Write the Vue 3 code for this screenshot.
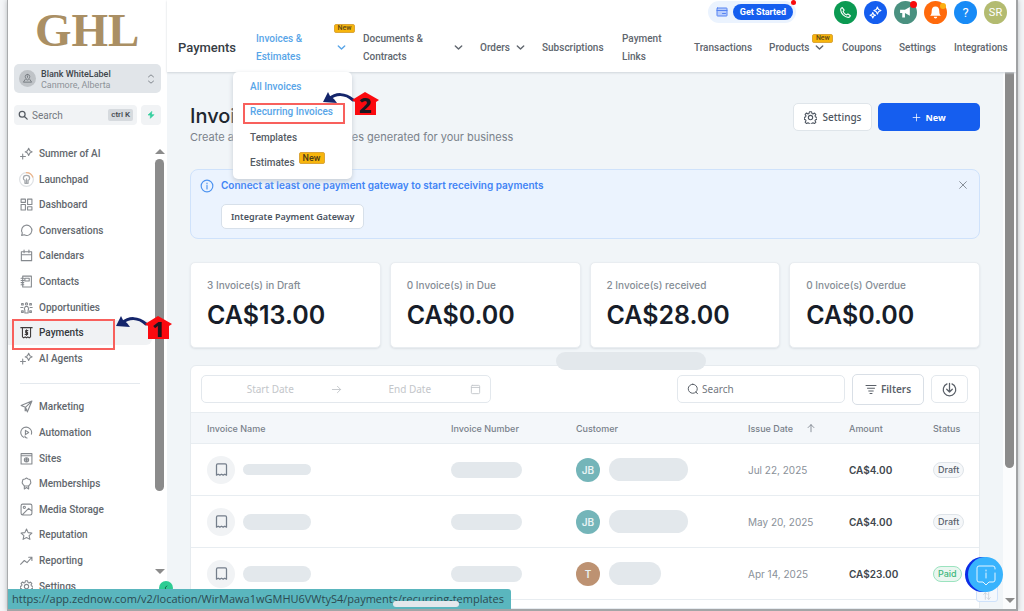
<script setup>
import { ref } from 'vue'

const icons = {
  ai: ['M5 13v9M1 17.500h9', 'M16 2.500l2.200 4.300L22.500 9l-4.300 2.200L16 15.500l-2.200-4.300L9.500 9l4.300-2.200z'],
  launch: ['M12 5.500c3 0 5 2 5 4.500 0 2-1.500 3-2.500 3.200V18h-5v-4.800C8.500 13 7 12 7 10c0-2.500 2-4.500 5-4.500zM12 11v7'],
  dashboard: ['M2 2h8v6H2zM14 2h8v10h-8zM2 12h8v10H2zM14 16h8v6h-8z'],
  chat: ['M3 21l1.300-4.500A9.500 9.500 0 1 1 8 20z'],
  calendar: ['M2.500 5h19v16.500h-19zM2.500 10.500h19M7.500 2v5M16.500 2v5'],
  contacts: ['M5 2h16v20H5zM9 6h8v5H9zM2 6h5M2 10h5M2 14h5M2 18h5'],
  opportunities: ['M12 3.500a2 2 0 1 1 0 4 2 2 0 0 1 0-4zM9 22v-5l-1-3 2-4h4l2 4-1 3v5zM3 4.500h3v3H3zM18 4.500h3v3h-3zM1.500 12h4M18.500 12h4M3 18h3v3H3zM18 18h3v3h-3z'],
  payments: ['M1.500 3h21M4.500 3v17M19.500 3v17M4.500 20l2.500 2 2.500-2 2.500 2 2.500-2 2.500 2 2.500-2', 'M14.500 8.500h-4v3.500h3.500v3.500H9.500M12 7v10'],
  send: ['M22 2L2 10l8 3.500L13.500 22zM22 2L10 13.500M9.500 14v6l3-3'],
  automation: ['M7 21a10 10 0 1 1 14-6M10 8l6 4-6 4zM9 18.500c0 2 2 3.500 4 3.500'],
  sites: ['M2 3h20v19H2zM2 7h20M12 10.500a4 4 0 1 1 0 8 4 4 0 0 1 0-8zM8 14.500h8M12 10.500v8'],
  badge: ['M12 2l3 1.500 3.500 1 1 3.500.5 3-2 3-2 2.500H8L6 14l-2-3 .5-3 1-3.500L9 3.500zM8 16v6l4-2.500L16 22v-6'],
  image: ['M5 2h14a3 3 0 0 1 3 3v14a3 3 0 0 1-3 3H5a3 3 0 0 1-3-3V5a3 3 0 0 1 3-3zM8 6a2 2 0 1 1 0 4 2 2 0 0 1 0-4zM5 21L16 10l6 5'],
  star: ['M12 2l3 6.500 7 .8-5.200 4.700L18.300 21 12 17.500 5.700 21l1.500-7L2 9.300l7-.8z'],
  trend: ['M1 19l7-7 5 4 9-10M16 6h6v6'],
  gear: ['M12 8a4 4 0 1 1 0 8 4 4 0 0 1 0-8z', 'M10 1.500h4l.7 3 2 .9 2.600-1.700 2.500 2.600-1.500 2.700.9 2 2.800.5v4l-2.800.5-.9 2 1.600 2.700-2.600 2.600-2.600-1.600-2 .8-.7 2h-4l-.7-2-2-.8-2.600 1.600-2.600-2.600 1.600-2.700-.9-2-2.300-.5v-4l2.300-.5.9-2-1.600-2.700 2.600-2.600 2.600 1.700 2-.9z'],
  search: ['M10 3a7 7 0 1 1 0 14 7 7 0 0 1 0-14zM15 15l7 7'],
  magnify: ['M11.500 2.500a9 9 0 1 1 0 18 9 9 0 0 1 0-18zM18 18l3 3.500'],
  down: ['M5 8.500l7 7 7-7'],
  updown: ['M6 7l6-5 6 5M6 17l6 5 6-5'],
  plus: ['M12 3v18M3 12h18'],
  close: ['M4 4l16 16M20 4L4 20'],
  info: ['M12 2a10 10 0 1 1 0 20 10 10 0 0 1 0-20zM12 11v6M12 7v1'],
  arrow: ['M3 12h18M14 5l7 7-7 7'],
  up: ['M12 21V4M5 11l7-7 7 7'],
  cal: ['M5 3h14a2 2 0 0 1 2 2v14a2 2 0 0 1-2 2H5a2 2 0 0 1-2-2V5a2 2 0 0 1 2-2zM3 7.500h18'],
  filter: ['M2 5h20M5 10.500h14M7.500 16h9M10 21h4'],
  download: ['M8 3a10 10 0 1 0 8 0M12 2v14M7.500 11.500L12 16l4.500-4.500'],
  receipt: ['M4 21V5a2 2 0 0 1 2-2h12a2 2 0 0 1 2 2v16l-2.700-1.500L14.700 21 12 19.500 9.300 21l-2.600-1.500z'],
  phone: ['M6 3l3.500 4.500L7.500 10c1 3 3.500 5.500 6.500 6.500l2.500-2L21 18c-.5 2-2 3-4 3C10 20.500 3.500 14 3 7c0-2 1-3.500 3-4z'],
  stars: ['M15.500 2l2 4.500L22 8.500l-4.500 2-2 4.500-2-4.500-4.500-2 4.500-2zM7 12l1.500 3.500L12 17l-3.500 1.500L7 22l-1.500-3.500L2 17l3.500-1.500z'],
  card: ['M3 4h18a1 1 0 0 1 1 1v14a1 1 0 0 1-1 1H3a1 1 0 0 1-1-1V5a1 1 0 0 1 1-1zM2 9h20M13 15h6'],
}

const mainNav = [
  ['Summer of AI', 'ai'], ['Launchpad', 'launch'], ['Dashboard', 'dashboard'], ['Conversations', 'chat'],
  ['Calendars', 'calendar'], ['Contacts', 'contacts'], ['Opportunities', 'opportunities'],
  ['Payments', 'payments'], ['AI Agents', 'ai'],
]
const moreNav = [
  ['Marketing', 'send'], ['Automation', 'automation'], ['Sites', 'sites'], ['Memberships', 'badge'],
  ['Media Storage', 'image'], ['Reputation', 'star'], ['Reporting', 'trend'], ['Settings', 'gear'],
]
const tabs = [
  { label: 'Invoices & Estimates', wrap: true, menu: true, isNew: true, active: true },
  { label: 'Documents & Contracts', wrap: true, menu: true },
  { label: 'Orders', menu: true },
  { label: 'Subscriptions' },
  { label: 'Payment Links', wrap: true },
  { label: 'Transactions' },
  { label: 'Products', menu: true, isNew: true },
  { label: 'Coupons' },
  { label: 'Settings' },
  { label: 'Integrations' },
]
const cards = [
  ['3 Invoice(s) in Draft', 'CA$13.00'], ['0 Invoice(s) in Due', 'CA$0.00'],
  ['2 Invoice(s) received', 'CA$28.00'], ['0 Invoice(s) Overdue', 'CA$0.00'],
]
const rows = [
  { who: 'JB', tone: 'teal', date: 'Jul 22, 2025', amount: 'CA$4.00', status: 'Draft', thin: true },
  { who: 'JB', tone: 'teal', date: 'May 20, 2025', amount: 'CA$4.00', status: 'Draft' },
  { who: 'T', tone: 'brown', date: 'Apr 14, 2025', amount: 'CA$23.00', status: 'Paid', short: true },
]
const query = ref('')
const navQuery = ref('')
</script>

<template>
  <div class="screen">
    <aside class="sidebar">
      <div class="logo">GHL</div>
      <button class="account">
        <span class="account-pic">
          <svg viewBox="0 0 24 24"><path d="M12 3a5 5 0 0 1 5 5c0 3-5 8-5 8s-5-5-5-8a5 5 0 0 1 5-5zM12 6.500v3M7 14l-4 6h18l-4-6" /></svg>
        </span>
        <span class="account-text"><b>Blank WhiteLabel</b><span>Canmore, Alberta</span></span>
        <svg class="account-arrows" viewBox="0 0 24 24"><path :d="icons.updown[0]" /></svg>
      </button>
      <div class="quick">
        <label class="quick-search">
          <svg viewBox="0 0 24 24"><path :d="icons.search[0]" /></svg>
          <input v-model="navQuery" placeholder="Search" aria-label="Search menu" />
          <kbd>ctrl K</kbd>
        </label>
        <button class="bolt" aria-label="Quick actions">
          <svg viewBox="0 0 24 24"><path d="M14 2L3 12h7v10l11-11h-7z" /></svg>
        </button>
      </div>
      <div class="side-body">
        <nav class="side-nav">
          <div class="side-list main-list">
            <a v-for="[label, icon] in mainNav" :key="label" href="#" class="side-link" :class="{ current: label === 'Payments' }">
              <svg viewBox="0 0 24 24" :class="{ ringed: icon === 'launch' }">
                <template v-if="icon === 'launch'">
                  <circle class="ring" cx="12" cy="12" r="11" />
                  <path class="ring-arc" d="M12 1a11 11 0 0 1 10 7" />
                </template>
                <path v-for="d in icons[icon]" :key="d" :d="d" />
              </svg>{{ label }}
            </a>
          </div>
          <hr />
          <div class="side-list more-list">
            <a v-for="[label, icon] in moreNav" :key="label" href="#" class="side-link">
              <svg viewBox="0 0 24 24"><path v-for="d in icons[icon]" :key="d" :d="d" /></svg>{{ label }}
            </a>
          </div>
        </nav>
        <div class="side-scroll"><i class="tri-up"></i><i class="thumb"></i><i class="tri-down"></i></div>
      </div>
      <span class="collapse"><svg viewBox="0 0 24 24"><path d="M15 4L8 12l7 8" /></svg></span>
      <span class="red-box pay-box"></span>
    </aside>

    <div class="main">
      <header class="header">
        <div class="tools">
          <div class="start">
            <svg viewBox="0 0 24 24"><path :d="icons.card[0]" /></svg>
            <button>Get Started</button>
            <i class="dot start-dot"></i>
          </div>
          <button class="tool green" aria-label="Phone"><svg viewBox="0 0 24 24"><path :d="icons.phone[0]" /></svg></button>
          <button class="tool blue" aria-label="Assistant"><svg viewBox="0 0 24 24"><path :d="icons.stars[0]" /></svg></button>
          <button class="tool sea" aria-label="News">
            <svg viewBox="0 0 24 24"><path class="solid" d="M2 7h9l9-5v16l-9-5v8H6v-8H2z" /></svg><i class="dot"></i>
          </button>
          <button class="tool orange" aria-label="Notifications">
            <svg viewBox="0 0 24 24"><path class="solid" d="M12 1c5 0 7 4 7 8 0 5 1 7 3 9H2c2-2 3-4 3-9 0-4 2-8 7-8zM9 20h6c0 2-1 3-3 3s-3-1-3-3z" /></svg><i class="dot amber"></i>
          </button>
          <button class="tool sky" aria-label="Help">?</button>
          <button class="tool user">SR</button>
        </div>
        <nav class="tabs">
          <strong>Payments</strong>
          <a v-for="t in tabs" :key="t.label" href="#" class="tab" :class="{ active: t.active, spread: t.wrap && t.menu }">
            <span :class="{ two: t.wrap }">{{ t.label }}</span>
            <span v-if="t.menu" class="chev">
              <svg viewBox="0 0 24 24"><path :d="icons.down[0]" /></svg>
              <em v-if="t.isNew" class="new">New</em>
            </span>
          </a>
        </nav>
        <div class="dropdown">
          <a href="#" class="on">All Invoices</a>
          <a href="#" class="on">Recurring Invoices</a>
          <a href="#">Templates</a>
          <a href="#">Estimates <em class="new-big">New</em></a>
          <span class="red-box"></span>
        </div>
      </header>

      <div class="body">
        <main class="content">
          <div class="head">
            <div><h1>Invoices</h1><p>Create and manage your invoices generated for your business</p></div>
            <div class="actions">
              <button class="btn"><svg viewBox="0 0 24 24"><path v-for="d in icons.gear" :key="d" :d="d" /></svg>Settings</button>
              <button class="btn primary"><svg viewBox="0 0 24 24"><path :d="icons.plus[0]" /></svg>New</button>
            </div>
          </div>

          <section class="banner">
            <svg viewBox="0 0 24 24"><path :d="icons.info[0]" /></svg>
            <div>
              <p>Connect at least one payment gateway to start receiving payments</p>
              <button>Integrate Payment Gateway</button>
            </div>
            <button class="close" aria-label="Close"><svg viewBox="0 0 24 24"><path :d="icons.close[0]" /></svg></button>
          </section>

          <section class="cards">
            <article v-for="([label, sum], i) in cards" :key="i"><p>{{ label }}</p><strong>{{ sum }}</strong></article>
          </section>

          <section class="panel">
            <i class="blob float-blob"></i>
            <div class="toolbar">
              <div class="dates">
                <input placeholder="Start Date" aria-label="Start date" />
                <svg viewBox="0 0 24 24"><path :d="icons.arrow[0]" /></svg>
                <input placeholder="End Date" aria-label="End date" />
                <svg viewBox="0 0 24 24"><path :d="icons.cal[0]" /></svg>
              </div>
              <label class="find">
                <svg viewBox="0 0 24 24"><path :d="icons.magnify[0]" /></svg>
                <input v-model="query" placeholder="Search" aria-label="Search invoices" />
              </label>
              <button class="filters"><svg viewBox="0 0 24 24"><path :d="icons.filter[0]" /></svg>Filters</button>
              <button class="export" aria-label="Download"><svg viewBox="0 0 24 24"><path :d="icons.download[0]" /></svg></button>
            </div>
            <table>
              <colgroup><col /><col class="c-num" /><col class="c-cust" /><col class="c-date" /><col class="c-amt" /><col class="c-stat" /></colgroup>
              <thead>
                <tr>
                  <th>Invoice Name</th><th>Invoice Number</th><th>Customer</th>
                  <th>Issue Date <svg viewBox="0 0 24 24"><path :d="icons.up[0]" /></svg></th>
                  <th>Amount</th><th>Status</th>
                </tr>
              </thead>
              <tbody>
                <tr v-for="(r, i) in rows" :key="i">
                  <td>
                    <div class="cell">
                      <span class="doc"><svg viewBox="0 0 24 24"><path :d="icons.receipt[0]" /></svg></span>
                      <i class="blob name-blob" :class="{ thin: r.thin }"></i>
                    </div>
                  </td>
                  <td><i class="blob num-blob"></i></td>
                  <td>
                    <div class="cell cust"><span class="avatar" :class="r.tone">{{ r.who }}</span><i class="blob cust-blob" :class="{ short: r.short }"></i></div>
                  </td>
                  <td class="date">{{ r.date }}</td>
                  <td class="amount">{{ r.amount }}</td>
                  <td><span class="pill" :class="{ paid: r.status === 'Paid' }">{{ r.status }}</span></td>
                </tr>
              </tbody>
            </table>
          </section>
        </main>
        <div class="page-scroll"><i class="thumb"></i><i class="tri-down"></i></div>
      </div>
    </div>

    <span class="sort-chip"><svg viewBox="0 0 24 24"><path d="M8 20V4M4 8l4-4 4 4M16 4v16M12 16l4 4 4-4" /></svg></span>
    <button class="help" aria-label="Chat">
      <svg viewBox="0 0 24 24"><path d="M21 10v7a2 2 0 0 1-2 2h-4l-3 3-3-3H5a2 2 0 0 1-2-2V5a2 2 0 0 1 2-2h14a2 2 0 0 1 2 2v1M12 10v5M12 7v1" /></svg>
    </button>

    <svg v-for="n in 2" :key="n" class="marker" :class="'marker-' + n" viewBox="0 0 58 26">
      <path class="tail" d="M7 8C14 2 23 2 31 9" />
      <path class="tip" d="M1 11L6 1l2 4 4 3 3 4z" />
      <path class="house" d="M43 1l14 8-3 2v13H33V11l-3-2z" />
      <text x="43" y="22" text-anchor="middle">{{ n }}</text>
    </svg>

    <div class="url">https://app.zednow.com/v2/location/WirMawa1wGMHU6VWtyS4/payments/recurring-templates<i></i></div>
  </div>
</template>

<style>
body { margin: 0; background: #f3f5f7; overflow: hidden; }
</style>

<style scoped>
* { box-sizing: border-box; }
.screen { position: relative; display: flex; height: 100vh; margin: 0 6px 0 7px; border-left: 1px solid #a9abad; border-right: 2px solid #a0a2a4; border-bottom: 2px solid #a3a5a7; box-shadow: 0 0 5px #b5b8bb; overflow: hidden; background: #fff; font-family: Roboto, "Liberation Sans", sans-serif; color: #5b6169; }
svg { fill: none; stroke: currentColor; stroke-width: 2; stroke-linecap: round; stroke-linejoin: round; flex: none; }
a { color: inherit; text-decoration: none; }
button, input { font: inherit; color: inherit; border: 0; padding: 0; background: none; min-width: 0; }
input { outline: 0; }
em, i { font-style: normal; }
p, h1 { margin: 0; }
.solid { fill: currentColor; stroke: none; }

.sidebar { position: relative; display: flex; flex-direction: column; width: 159px; flex: none; background: #fff; }
.logo { height: 64px; padding-left: 27px; font: bold 47px/60px "Liberation Serif", serif; color: #aa8f64; }
.account { display: flex; align-items: center; gap: 5px; height: 29px; margin: 0 6px; padding: 0 5px; border-radius: 5px; background: #e1e5e9; text-align: left; }
.account-pic { display: grid; place-items: center; width: 17px; height: 17px; border-radius: 50%; background: #bfc3c7; color: #74797f; }
.account-pic svg { width: 11px; height: 11px; }
.account-text { flex: 1; padding-top: 2px; font-size: 9px; line-height: 11px; color: #8d9298; white-space: nowrap; }
.account-text b { display: block; font-weight: 500; color: #3f454c; }
.account-text span { display: block; }
.account-arrows { width: 10px; height: 14px; color: #6f757c; }
.quick { display: flex; gap: 4px; margin: 12px 6px 0; height: 20px; }
.quick-search { flex: 1; min-width: 0; display: flex; align-items: center; gap: 4px; padding: 0 4px; border-radius: 4px; background: #f1f3f5; font-size: 10px; }
.quick-search svg { width: 10px; height: 10px; stroke-width: 3; color: #555b62; }
.quick-search input { flex: 1; width: 0; }
input::placeholder { color: #73787f; opacity: 1; }
kbd { padding: 0 3px; border-radius: 2px; background: #d6dade; color: #40464d; font: 500 8px/12px Roboto, sans-serif; white-space: nowrap; }
.bolt { display: grid; place-items: center; width: 20px; border-radius: 4px; background: #f1f3f5; }
.bolt svg { width: 8px; height: 8px; fill: #35cf9e; stroke: #35cf9e; }
.side-body { flex: 1; display: flex; margin-top: 16px; min-height: 0; }
.side-nav { flex: 1; }
.side-list { display: grid; grid-auto-rows: 1fr; }
.main-list { height: 230px; }
.more-list { height: 205px; }
.side-link { display: flex; align-items: center; gap: 6px; padding-left: 12px; border-radius: 0 6px 6px 0; font-size: 10px; font-weight: 500; color: #62676d; }
.side-link svg { width: 13px; height: 13px; stroke-width: 2; color: #85898e; }
.side-link svg.ringed { width: 15px; height: 15px; margin: 0 -1px; color: #a4a8ac; }
.side-link .ring { stroke: #dfe2e5; }
.side-link .ring-arc { stroke: #efb589; }
.side-link.current { background: #f0f2f4; color: #34383d; }
.side-link.current svg { color: #3e3b3b; }
.side-nav hr { border: 0; height: 1px; margin: 12px 12px 10px; background: #e4e9ee; }
.side-scroll { display: flex; flex-direction: column; align-items: center; width: 15px; padding-top: 8px; }
.tri-up, .tri-down { border: 5px solid transparent; border-top: 0; border-bottom: 5px solid #8b8b8b; }
.tri-down { border-top: 5px solid #8b8b8b; border-bottom: 0; }
.thumb { width: 9px; border-radius: 5px; background: #8b8b8b; }
.side-scroll .thumb { height: 332px; margin: 5px 0 78px; }
.collapse { position: absolute; left: 151px; bottom: 14px; display: grid; place-items: center; width: 14px; height: 14px; border-radius: 50%; background: #2dcc93; color: #176b4d; z-index: 2; }
.collapse svg { width: 6px; height: 6px; stroke-width: 4; }
.red-box { position: absolute; border: 2px solid #f8605c; pointer-events: none; }
.pay-box { left: 4px; top: 319px; width: 103px; height: 31px; }

.main { flex: 1; min-width: 0; display: flex; flex-direction: column; }
.header { position: relative; z-index: 3; height: 72px; background: #fff; box-shadow: 0 1px 2px #cfd5da; }
.tools { display: flex; justify-content: flex-end; align-items: center; gap: 7px; height: 24px; padding-right: 9px; }
.start { position: relative; display: flex; align-items: center; gap: 5px; height: 22px; padding: 0 3px 0 8px; margin-right: 31px; border-radius: 11px; background: #ebf3fe; color: #5583f3; }
.start svg { width: 12px; height: 12px; fill: #b9cdfb; }
.start button { height: 16px; padding: 0 7px; border-radius: 8px; background: #155eef; color: #fff; font-size: 9px; font-weight: 700; }
.dot { position: absolute; right: 0; top: 0; width: 7px; height: 7px; border-radius: 50%; background: #f90b0b; }
.dot.amber { background: #fbb013; right: 1px; top: 2px; width: 6px; height: 6px; }
.start-dot { width: 5px; height: 5px; top: -1px; }
.tool { position: relative; display: grid; place-items: center; width: 23px; height: 23px; border-radius: 50%; color: #fff; font-size: 13px; }
.tool svg { width: 13px; height: 13px; }
.green { background: #0b9a52; } .blue { background: #155eef; } .sea { background: #4a9180; } .orange { background: #ff6a0c; } .sky { background: #188bf6; }
.user { background: #b3bb70; font-size: 11px; }
.tabs { display: grid; grid-template-columns: 78fr 107fr 117fr 62fr 80fr 72fr 75fr 73fr 57fr 55fr 62fr; align-items: center; height: 47px; padding-left: 11px; font-size: 10px; font-weight: 500; line-height: 18px; }
.tabs > * { min-width: 0; white-space: nowrap; }
.tabs strong { font-size: 13px; font-weight: 500; color: #373d44; }
.tab { display: flex; align-items: center; gap: 5px; color: #60666e; }
.tab.active { color: #58a5e8; }
.two { width: min-content; white-space: normal; }
.spread { justify-content: space-between; padding-right: 16px; }
.spread .two { width: 66px; }
.chev { position: relative; display: grid; }
.chev svg { width: 11px; height: 11px; stroke-width: 3; }
.new { position: absolute; left: -2px; bottom: 10px; width: 21px; border: 1px solid #dba63a; border-radius: 2px; background: #f7b50c; color: #5d4717; font-size: 7px; line-height: 7px; text-align: center; }
.active .new { bottom: 20px; }
.dropdown { position: absolute; left: 66px; top: 72px; display: grid; grid-auto-rows: 1fr; width: 119px; height: 107px; padding: 2px 0 4px; border-radius: 5px; background: #fff; box-shadow: 0 2px 5px #c6cdd5; font-size: 10px; font-weight: 500; color: #555b63; }
.dropdown a { display: flex; align-items: center; gap: 4px; padding-left: 17px; white-space: nowrap; }
.dropdown .on { color: #58a5e8; }
.new-big { padding: 0 3px; margin-bottom: 8px; border: 1px solid #dba63a; border-radius: 2px; background: #f7b50c; color: #4d3b16; font-size: 9px; line-height: 10px; }
.dropdown .red-box { left: 10px; top: 31px; width: 102px; height: 21px; }

.body { flex: 1; min-height: 0; display: flex; }
.content { flex: 1; min-width: 0; padding: 31px 23px 0; background: #f1f5f8; display: flex; flex-direction: column; font-family: Inter, "Liberation Sans", sans-serif; }
.head { display: flex; justify-content: space-between; height: 66px; }
h1 { font-size: 20px; line-height: 26px; font-weight: 500; color: #20262e; }
.head p { font-size: 11px; line-height: 17px; color: #7a828b; }
.actions { display: flex; gap: 6px; height: 28px; font: 500 10px "Noto Sans", sans-serif; }
.btn { display: flex; align-items: center; justify-content: center; gap: 6px; width: 79px; border: 1px solid #dfe5ea; border-radius: 5px; background: #fff; color: #4d5560; }
.btn svg { width: 13px; height: 13px; }
.btn.primary { width: 102px; gap: 4px; border: 0; background: #155eef; color: #fff; font-weight: 700; font-size: 9px; }
.primary svg { width: 9px; height: 9px; }
.banner { display: flex; gap: 7px; height: 70px; padding: 9px 10px 0 9px; border: 1px solid #cfe2fb; border-radius: 8px; background: #ebf3fe; color: #4284f5; font-size: 10px; font-weight: 600; }
.banner > div { flex: 1; }
.banner > svg { width: 14px; height: 14px; color: #4d93f0; }
.banner p { line-height: 13px; }
.banner div button { height: 25px; margin-top: 12px; padding: 0 9px; border: 1px solid #d7e0ea; border-radius: 5px; background: #fff; color: #4b545f; font: 600 9px "Noto Sans", sans-serif; }
.close { width: 12px; height: 14px; color: #737b84; }
.close svg { width: 10px; height: 10px; }
.cards { display: grid; grid-template-columns: repeat(4, 1fr); gap: 9px; margin-top: 23px; }
article { height: 86px; padding: 15px 16px 0; border: 1px solid #e9edf1; border-radius: 5px; background: #fff; box-shadow: 0 1px 2px #dbe0e5; }
article p { font: 500 10px/15px Inter, sans-serif; color: #858d95; }
article strong { display: block; margin-top: 7px; font-size: 25px; line-height: 30px; font-weight: 600; color: #171d29; }
.panel { position: relative; flex: 1; margin-top: 17px; border: 1px solid #e6ebef; border-radius: 6px 6px 0 0; background: #fff; }
.blob { display: block; flex: none; border-radius: 12px; background: #e3e8ec; }
.float-blob { position: absolute; left: 365px; top: -14px; width: 150px; height: 18px; }
.toolbar { display: flex; align-items: center; gap: 7px; height: 46px; padding: 0 11px 0 10px; }
.dates, .find, .filters, .export { display: flex; align-items: center; height: 28px; border: 1px solid #e3e8ed; border-radius: 5px; font: 400 10px "Noto Sans", sans-serif; }
.dates { width: 290px; margin-right: auto; padding: 0 9px 0 0; color: #c3c6ca; }
.dates input { flex: 1; width: 0; padding-left: 8px; text-align: center; }
.dates input::placeholder { color: #c3c6ca; }
.dates svg { width: 11px; height: 11px; }
.find { width: 168px; gap: 3px; padding: 0 9px; }
.find svg { width: 12px; height: 12px; }
.find input { flex: 1; }
.filters { justify-content: center; gap: 4px; width: 72px; height: 31px; border-color: #d9dfe6; font-weight: 600; }
.filters svg { width: 12px; height: 12px; }
.export { justify-content: center; width: 37px; }
.export svg { width: 15px; height: 15px; }
table { width: 100%; table-layout: fixed; border-collapse: collapse; }
.c-num { width: 125px; } .c-cust { width: 172px; } .c-date { width: 101px; } .c-amt { width: 84px; } .c-stat { width: 62px; }
th { height: 31px; padding: 0 0 0 16px; border-top: 1px solid #e8edf1; background: #f4f7fa; text-align: left; font-size: 9px; font-weight: 500; color: #79818a; white-space: nowrap; }
th svg { width: 10px; height: 10px; margin-left: 10px; vertical-align: -1px; }
td { height: 52px; padding: 0 0 0 16px; border-top: 1px solid #e8edf1; border-bottom: 1px solid #e8edf1; white-space: nowrap; font-size: 10px; }
.cell { display: flex; align-items: center; gap: 8px; }
.cust { gap: 9px; }
.doc { display: grid; place-items: center; width: 28px; height: 28px; border-radius: 50%; background: #f1f3f5; color: #747e8b; }
.doc svg { width: 15px; height: 15px; }
.name-blob { width: 68px; height: 16px; }
.name-blob.thin { height: 11px; }
.num-blob { width: 71px; height: 16px; }
.cust-blob { width: 79px; height: 23px; }
.cust-blob.short { width: 52px; }
.avatar { display: grid; place-items: center; width: 24px; height: 24px; border-radius: 50%; background: #74b5b9; color: #e8f3f4; font-weight: 600; }
.brown { background: #bd9272; }
.date { color: #8a9199; }
.amount { font-weight: 600; color: #40464d; }
.pill { display: inline-block; padding: 0 4px; border: 1px solid #dfe4e9; border-radius: 8px; background: #f5f7f9; font: 500 9px/14px Inter, sans-serif; color: #5a626c; }
.paid { border-color: #9be3bf; background: #eaf6f0; color: #3db67c; }
.page-scroll { display: flex; flex-direction: column; align-items: center; width: 13px; background: #fbfcfd; padding-bottom: 6px; }
.page-scroll .thumb { height: 396px; margin-bottom: auto; border-radius: 0 0 5px 5px; }

.sort-chip { position: absolute; right: 18px; bottom: 7px; display: grid; place-items: end center; width: 22px; height: 22px; border: 1px solid #cfe2fb; border-radius: 3px; background: #f4f8fd; color: #c9d0d8; }
.sort-chip svg { width: 10px; height: 10px; }
.help { position: absolute; right: 13px; bottom: 17px; display: grid; place-items: center; width: 35px; height: 35px; border-radius: 50%; background: #38b3fd; color: #e4f5ff; box-shadow: -3px 0 0 #0b2ce6; }
.help svg { width: 24px; height: 24px; stroke-width: 1; }
.marker { position: absolute; z-index: 5; width: 58px; height: 26px; overflow: visible; }
.marker-1 { left: 107px; top: 315px; }
.marker-2 { left: 314px; top: 91px; }
.tail { stroke: #14256b; stroke-width: 3; }
.tip { fill: #14256b; stroke: none; }
.house { fill: #fb0a0f; stroke: none; }
.marker text { fill: #1c1720; stroke: none; font: 800 22px "Noto Sans", sans-serif; }
.url { position: absolute; z-index: 6; left: 0; bottom: 0; height: 20px; padding: 0 7px 0 4px; border-radius: 0 3px 0 0; background: #5ab6be; color: #2c4a51; font: 400 11px/20px "Open Sans", sans-serif; white-space: nowrap; }
.url i { position: absolute; right: 52px; bottom: 2px; width: 66px; height: 6px; border-radius: 3px; background: #e3e8ec; }
</style>
